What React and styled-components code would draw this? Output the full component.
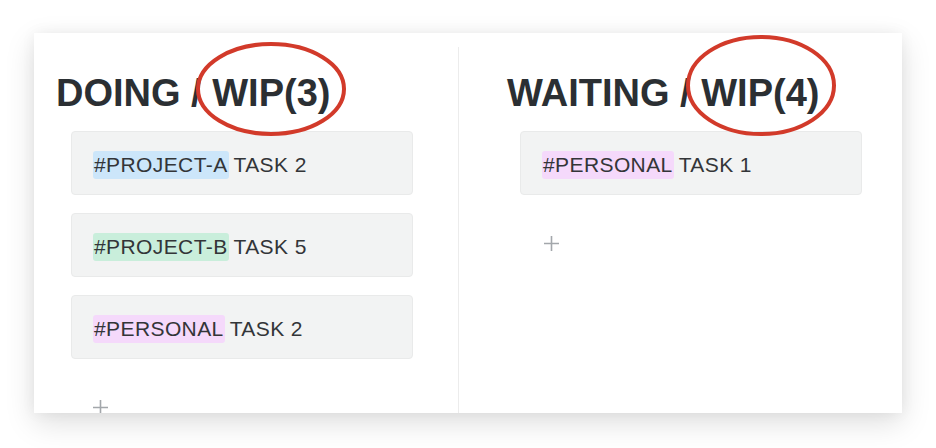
import React from "react";
import styled, { createGlobalStyle } from "styled-components";

const GlobalStyle = createGlobalStyle`
  html, body {
    margin: 0;
    padding: 0;
    background: #ffffff;
    font-family: "Liberation Sans", Arial, sans-serif;
  }
`;

const Page = styled.div`
  width: 936px;
  height: 448px;
  overflow: hidden;
  padding: 33px 0 0 34px;
  box-sizing: border-box;
`;

const Board = styled.div`
  width: 868px;
  height: 380px;
  background: #ffffff;
  box-shadow: 0 10px 28px rgba(0, 0, 0, 0.13), 0 0 14px rgba(0, 0, 0, 0.05);
  display: grid;
  grid-template-columns: 425px 1fr;
  overflow: hidden;
`;

const Column = styled.section`
  position: relative;
  padding-left: ${p => p.$pad}px;
  border-right: ${p => (p.$divider ? "1px solid #ececec" : "none")};
  margin-top: ${p => (p.$divider ? "14px" : "0")};
  padding-top: ${p => (p.$divider ? "27px" : "41px")};
`;

const Heading = styled.h2`
  position: relative;
  margin: 0 0 19px;
  font-size: 38px;
  line-height: 38px;
  font-weight: 700;
  color: #2b2f33;
  white-space: nowrap;
`;

const Circle = styled.svg`
  position: absolute;
  left: ${p => p.$left}px;
  top: ${p => p.$top}px;
  overflow: visible;
  pointer-events: none;
`;

const Cards = styled.div`
  margin-left: ${p => p.$inset}px;
  width: 342px;
  display: flex;
  flex-direction: column;
  gap: 18px;
`;

const Card = styled.div`
  height: 64px;
  box-sizing: border-box;
  background: #f2f3f3;
  border: 1px solid #e9eaea;
  border-radius: 4px;
  display: flex;
  align-items: center;
  padding: 4px 0 0 21px;
  font-size: 21px;
  letter-spacing: 0.4px;
  color: #333538;
`;

const Tag = styled.span`
  background: ${p => p.$bg};
  border-radius: 3px;
  padding: 2px 1px;
  margin-right: 5px;
`;

const Add = styled.div`
  margin: 40px 0 0 36px;
  width: 17px;
  height: 17px;
  color: #a3a7ab;
`;

const tags = {
  "PROJECT-A": "#cce6fa",
  "PROJECT-B": "#c9eedb",
  PERSONAL: "#f5d9fb",
};

const Ellipse = ({ left, top, h }) => (
  <Circle $left={left} $top={top} width="150" height={h} viewBox={`0 0 150 ${h}`}>
    <ellipse
      cx="75"
      cy={h / 2}
      rx="73"
      ry={h / 2 - 2}
      fill="none"
      stroke="#d23a2a"
      strokeWidth="4"
    />
  </Circle>
);

const Plus = () => (
  <Add>
    <svg width="17" height="17" viewBox="0 0 17 17">
      <path d="M8.5 1v15M1 8.5h15" stroke="currentColor" strokeWidth="1.6" />
    </svg>
  </Add>
);

const TaskCard = ({ tag, title }) => (
  <Card>
    <Tag $bg={tags[tag]}>#{tag}</Tag>
    {title}
  </Card>
);

const columns = [
  {
    title: "DOING / WIP(3)",
    pad: 22,
    inset: 15,
    circle: { left: 140, top: -32, h: 94 },
    divider: true,
    tasks: [
      { tag: "PROJECT-A", title: "TASK 2" },
      { tag: "PROJECT-B", title: "TASK 5" },
      { tag: "PERSONAL", title: "TASK 2" },
    ],
  },
  {
    title: "WAITING / WIP(4)",
    pad: 48,
    inset: 13,
    circle: { left: 179, top: -39, h: 101 },
    divider: false,
    tasks: [{ tag: "PERSONAL", title: "TASK 1" }],
  },
];

export default function App() {
  return (
    <Page>
      <GlobalStyle />
      <Board>
        {columns.map(col => (
          <Column key={col.title} $pad={col.pad} $divider={col.divider}>
            <Heading>
              {col.title}
              <Ellipse {...col.circle} />
            </Heading>
            <Cards $inset={col.inset}>
              {col.tasks.map((t, i) => (
                <TaskCard key={i} tag={t.tag} title={t.title} />
              ))}
            </Cards>
            <Plus />
          </Column>
        ))}
      </Board>
    </Page>
  );
}
